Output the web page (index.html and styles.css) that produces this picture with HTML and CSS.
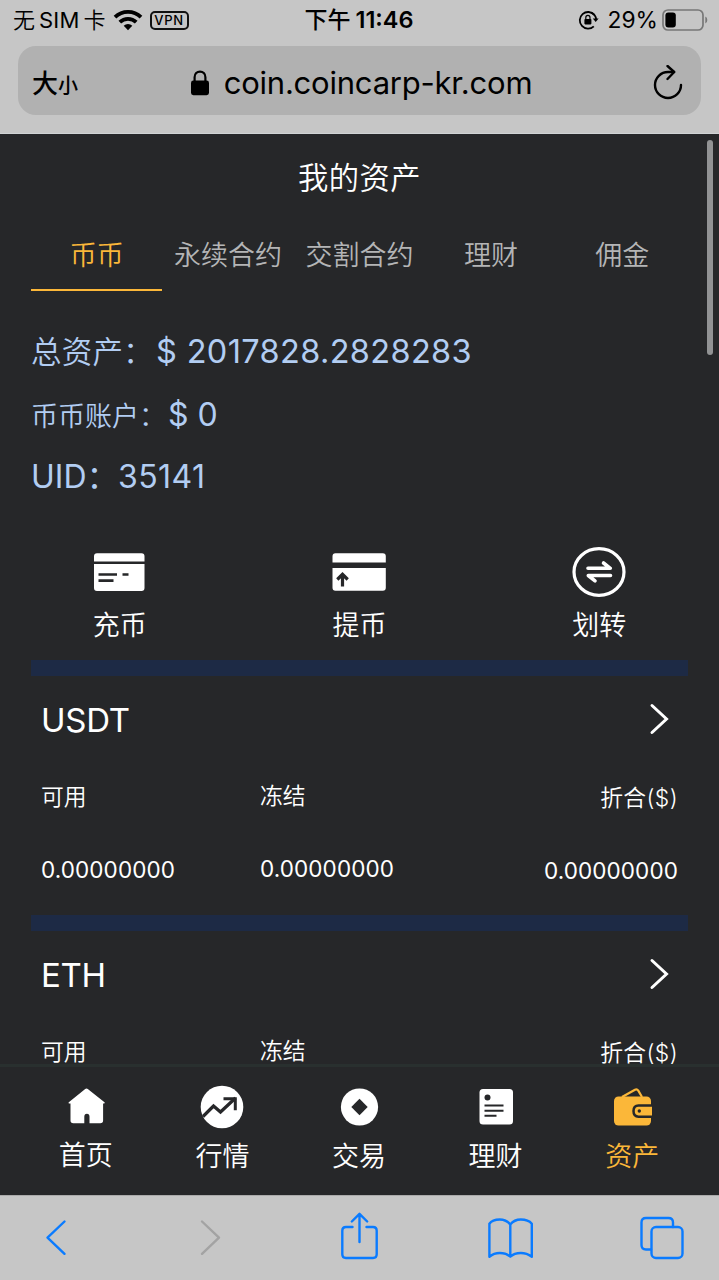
FILE: index.html
```html
<!DOCTYPE html>
<html lang="zh-CN">
<head>
<meta charset="utf-8">
<title>我的资产</title>
<link rel="stylesheet" href="styles.css">
</head>
<body>
<div class="phone">
  <header class="browser-top">
    <div class="status">
      <div class="status-left">
        <span class="carrier">无<span class="sim">SIM</span>卡</span>
        <svg class="wifi" width="30" height="22" viewBox="0 0 30 22"><g fill="none" stroke="#000" stroke-width="3.8"><path d="M2 8.2a18.6 18.6 0 0 1 26 0"/><path d="M6.8 13.2a11.8 11.8 0 0 1 16.4 0"/></g><path d="M15 21.2l-4.3-4.4a6.2 6.2 0 0 1 8.6 0z"/></svg>
        <span class="vpn">VPN</span>
      </div>
      <div class="clock">下午<b>11:46</b></div>
      <div class="status-right">
        <svg class="lock-rotation" width="22" height="20" viewBox="0 0 22 20" fill="none" stroke="#000" stroke-width="1.8"><path d="M16.4 4.900A8.300 8.300 0 1 0 15.800 16.300"/><path d="M13 2.600A8.300 8.300 0 0 1 18.200 9.500"/><path d="M14.800 8.500h5.800l-2.900 3.600z" fill="#000" stroke="none"/><rect x="6.400" y="9" width="7" height="5.400" rx=".8" fill="#000" stroke="none"/><path d="M7.800 9V7.400a2.100 2.100 0 0 1 4.200 0V9" stroke-width="1.200"/></svg>
        <span class="percent">29%</span>
        <svg width="46" height="22" viewBox="0 0 46 22"><rect x="1" y="1" width="40" height="20" rx="5" fill="none" stroke="#777" stroke-width="1.7"/><rect x="3.4" y="3.6" width="10.4" height="15" rx="3"/><path d="M43.3 7.4q2 .8 2 3.6t-2 3.6z" fill="#777"/></svg>
      </div>
    </div>
    <div class="address">
      <span class="textsize">大<small>小</small></span>
      <div class="host">
        <svg width="18" height="26" viewBox="0 0 18 26"><rect x="0" y="10.5" width="18" height="14.7" rx="2.4"/><path d="M3.6 11.5V7.3C3.6 3.7 6 1.6 9 1.6s5.4 2.1 5.4 5.700v4.200" fill="none" stroke="#000" stroke-width="2.200"/></svg>
        <span>coin.coincarp-kr.com</span>
      </div>
      <svg class="reload" width="30" height="36" viewBox="0 0 30 36" fill="none" stroke="#000" stroke-width="2.4" stroke-linecap="round" stroke-linejoin="round"><path d="M28 20A13 13 0 1 1 15 7h6"/><path d="M14.5 1l6.700 6-6.700 7"/></svg>
    </div>
  </header>

  <main class="page">
    <h1 class="title">我的资产</h1>
    <nav class="tabs">
      <span class="tab active">币币</span><span class="tab">永续合约</span><span class="tab">交割合约</span><span class="tab">理财</span><span class="tab">佣金</span>
    </nav>
    <section class="summary">
      <div class="row total"><span class="label">总资产：</span><span class="value">$ 2017828.2828283</span></div>
      <div class="row account"><span class="label">币币账户：</span><span class="value">$ 0</span></div>
      <div class="row uid"><span class="label">UID：</span><span class="value">35141</span></div>
    </section>
    <section class="actions">
      <div class="action">
        <svg width="54" height="54" viewBox="0 0 54 54"><path d="M1 15.500v-5.300a3 3 0 0 1 3-3h44.500a3 3 0 0 1 3 3v5.300z" fill="#fff"/><path d="M1 18h50.500v24a3 3 0 0 1-3 3H4a3 3 0 0 1-3-3z" fill="#fff"/><path d="M5.500 28.500H24M29.500 28.500h6M5.500 34.700h15" stroke="#262729" stroke-width="2.700"/></svg>
        <span>充币</span>
      </div>
      <div class="action">
        <svg width="54" height="54" viewBox="0 0 54 54"><path d="M.5 16.500v-6.300a3 3 0 0 1 3-3h47.300a3 3 0 0 1 3 3v6.300z" fill="#fff"/><path d="M.5 22h53.300v19.800a3 3 0 0 1-3 3H3.500a3 3 0 0 1-3-3z" fill="#fff"/><path d="M10.500 40.500V28.500M5.300 33.500l5.200-5.200 5.200 5.200" fill="none" stroke="#262729" stroke-width="3.200"/></svg>
        <span>提币</span>
      </div>
      <div class="action">
        <svg width="54" height="54" viewBox="0 0 54 54" fill="none" stroke="#fff"><ellipse cx="27" cy="26" rx="25" ry="23.300" stroke-width="3.200"/><path d="M16 22.300H38.300L31.500 17M38.500 29.500H16.300L23 34.800" stroke-width="3.600" stroke-linecap="round" stroke-linejoin="round"/></svg>
        <span>划转</span>
      </div>
    </section>
    <section class="coins">
      <article class="coin">
        <div class="coin-head"><span>USDT</span><svg width="20" height="32" viewBox="0 0 20 32"><path d="M3 2.500L17.500 16l-14.500 13.500" fill="none" stroke="#fff" stroke-width="3" stroke-linecap="round"/></svg></div>
        <div class="cells">
          <div class="cell"><span>可用</span><span class="amount">0.00000000</span></div>
          <div class="cell middle"><span>冻结</span><span class="amount">0.00000000</span></div>
          <div class="cell last"><span>折合($)</span><span class="amount">0.00000000</span></div>
        </div>
      </article>
      <article class="coin">
        <div class="coin-head"><span>ETH</span><svg width="20" height="32" viewBox="0 0 20 32"><path d="M3 2.500L17.500 16l-14.500 13.500" fill="none" stroke="#fff" stroke-width="3" stroke-linecap="round"/></svg></div>
        <div class="cells">
          <div class="cell"><span>可用</span></div>
          <div class="cell middle"><span>冻结</span></div>
          <div class="cell last"><span>折合($)</span></div>
        </div>
      </article>
    </section>
    <div class="scrollbar"></div>
  </main>

  <nav class="menu">
    <div class="item home">
      <svg width="44" height="44" viewBox="0 0 44 44"><path d="M22.500 3.500q.8 0 1.600.7L40.500 17.300q.8 1-.4 1.300h-1V35.500q0 2.800-2.800 2.800H25.500v-6.600q0-3-2.600-3t-2.600 3v6.600H9.300q-2.800 0-2.800-2.800V18.600h-1.500q-1-.4-.2-1.300L20.900 4.200q.8-.7 1.600-.7z" fill="#fff"/></svg>
      <span>首页</span>
    </div>
    <div class="item">
      <svg width="44" height="44" viewBox="0 0 44 44"><circle cx="22" cy="22" r="21.300" fill="#fff"/><path d="M3 31.500L13.500 21l7 6L35.500 13" fill="none" stroke="#262729" stroke-width="3.200"/><path d="M23.500 13.800h11.800v11.500" fill="none" stroke="#262729" stroke-width="3"/></svg>
      <span>行情</span>
    </div>
    <div class="item">
      <svg width="44" height="44" viewBox="0 0 44 44"><circle cx="22.500" cy="22" r="18.600" fill="#fff"/><path d="M22.500 13.800l8.200 8.200-8.200 8.200-8.200-8.200z" fill="#262729"/></svg>
      <span>交易</span>
    </div>
    <div class="item">
      <svg width="44" height="44" viewBox="0 0 44 44"><rect x="5.500" y="4" width="33.500" height="35.500" rx="3.500" fill="#fff"/><circle cx="13.500" cy="12.500" r="3" fill="#262729"/><path d="M10.500 20.500h19M10.500 25.700h19M10.500 30.700h12" stroke="#262729" stroke-width="2"/></svg>
      <span>理财</span>
    </div>
    <div class="item active">
      <svg width="44" height="44" viewBox="0 0 44 44"><path d="M12 12L25 4.700q2-1 3.300 1L32 12" fill="none" stroke="#fbb739" stroke-width="2.200"/><rect x="4" y="11.500" width="37" height="29" rx="4.500" fill="#fbb739"/><path d="M42 20.500H28.500q-5 0-5 5.600t5 5.600H42" fill="#fbb739" stroke="#262729" stroke-width="2.500"/><circle cx="29.300" cy="26" r="1.700" fill="#262729"/></svg>
      <span>资产</span>
    </div>
  </nav>

  <footer class="toolbar">
    <svg width="719" height="85" viewBox="0 0 719 85" fill="none" stroke="#0a7bff" stroke-width="2.400" stroke-linecap="round" stroke-linejoin="round">
      <path d="M64.500 26.500L47.500 42.600l17 16.200"/>
      <path d="M202 26.500l17 16.100-17 16.200" stroke="#a3a3a3"/>
      <path d="M352.500 32H346q-3.700 0-3.700 3.700v23.600q0 3.700 3.700 3.700h27q3.700 0 3.700-3.700V35.700q0-3.700-3.700-3.700h-6.500M359.500 47V19.500M351.800 26.500l7.700-7.700 7.700 7.700"/>
      <path d="M510.300 29.500q-4-5-10.500-5-7.500 0-10.400 4.200v33q4.500-3.700 10.400-3.700 6.500 0 10.500 3.700 4-3.700 10.500-3.700 6 0 11 3.700v-33q-3.500-4.200-11-4.200-6.500 0-10.500 5zv32"/>
      <path d="M651 54.500h-5q-4.500 0-4.500-4.500V27.500q0-4.500 4.500-4.500h22.500q4.500 0 4.500 4.500V32"/><rect x="651.500" y="32" width="31" height="31" rx="4.500"/>
    </svg>
  </footer>
</div>
</body>
</html>
```
FILE: styles.css
```css
* { box-sizing: border-box; }
body { margin: 0; font-family: Inter, "Noto Sans CJK SC", sans-serif; }
svg { display: block; flex: none; }
.phone { width: 719px; height: 1280px; display: flex; flex-direction: column; overflow: hidden; background: #262729; white-space: nowrap; }

.browser-top { height: 134px; flex: none; background: #c6c6c6; color: #000; border-bottom: 1px solid #d0d3d5; }
.status { height: 46px; padding: 0 11px 6px 13px; display: grid; grid-template-columns: 1fr auto 1fr; align-items: center; font-size: 22px; line-height: 40px; }
.status-left, .status-right { display: flex; align-items: center; }
.status-right { justify-content: flex-end; }
.carrier { display: flex; gap: 4px; font-weight: 350; }
.sim { font-size: 22px; letter-spacing: .2px; font-weight: 400; }
.wifi { margin-left: 7px; }
.vpn { margin-left: 7px; width: 39px; height: 19px; border: 2px solid #111; border-radius: 5px; font-size: 13px; line-height: 15px; font-weight: 500; letter-spacing: .8px; text-align: center; }
.clock { margin-left: -3px; font-size: 23px; font-weight: 500; }
.clock b { font-size: 23.500px; font-weight: 600; margin-left: 5px; }
.lock-rotation { margin-right: -2px; }
.percent { margin: 0 4px 0 10px; font-size: 22.800px; }
.address { height: 69px; margin: 0 18px; padding: 0 18px 4px 14px; border-radius: 18px; background: #b1b1b1; display: grid; grid-template-columns: 48px 1fr 30px; align-items: center; }
.textsize { font-size: 26px; font-weight: 500; line-height: 65px; padding-top: 5px; }
.textsize small { font-size: 20px; }
.host { display: flex; justify-content: center; align-items: center; gap: 15px; padding-right: 10px; font-size: 31px; line-height: 65px; letter-spacing: -.22px; }

.page { position: relative; flex: 1; min-height: 0; padding: 23px 31px 0; color: #fff; }
.title { margin: 0; padding-top: 1px; text-align: center; font-size: 30.300px; font-weight: 350; line-height: 40px; letter-spacing: .5px; }
.tabs { margin-top: 24px; display: grid; grid-template-columns: repeat(5, 1fr); height: 68px; color: #b4b5b6; font-size: 27px; font-weight: 350; line-height: 67px; text-align: center; }
.tab.active { color: #fbb739; border-bottom: 2px solid #fbb739; }
.summary { padding-top: 30px; color: #b2cdf2; }
.row { height: 63px; display: flex; align-items: center; line-height: 63px; font-size: 32px; }
.label { font-weight: 350; }
.total .label { font-size: 30.500px; width: 125px; letter-spacing: .2px; }
.total .value { font-size: 32.500px; letter-spacing: .35px; }
.account .label { font-size: 27px; width: 137px; padding-top: 4px; }
.uid { height: 61px; line-height: 61px; }
.uid .value { letter-spacing: .4px; }
.uid .label { width: 87px; font-weight: 400; }
.actions { margin: 39px -31px 0; display: grid; grid-template-columns: repeat(3, 1fr); height: 114px; }
.action { display: flex; flex-direction: column; align-items: center; font-size: 27px; font-weight: 350; line-height: 51px; }
.coin { border-top: 16px solid #1d2a45; height: 255px; }
.coin-head { display: flex; justify-content: space-between; align-items: center; height: 88px; padding: 0 19px 2px 10px; font-size: 33px; letter-spacing: -.3px; }
.coin-head span { padding-top: 2px; }
.cells { display: grid; grid-template-columns: 219px 219px 1fr; margin-top: -5px; padding: 0 10px; font-size: 22.800px; line-height: 73px; font-weight: 350; }
.cell { display: flex; flex-direction: column; padding-top: 1px; }
.middle { padding-top: 0; }
.last { text-align: right; padding-top: 2px; letter-spacing: .4px; }
.amount { font-size: 22.500px; font-weight: 400; letter-spacing: .1px; }
.scrollbar { position: absolute; right: 6px; top: 6px; width: 6px; height: 215px; border-radius: 3px; background: #929394; }

.menu { height: 131px; flex: none; border-top: 3px solid #29302f; color: #fff; display: grid; grid-template-columns: repeat(5, 1fr); padding: 18px 18px 0; }
.item { display: flex; flex-direction: column; align-items: center; font-size: 27px; font-weight: 350; line-height: 55px; }
.item span { margin-right: 1px; }
.item svg { margin-right: 1px; }
.item.home { line-height: 53px; }
.item.active { color: #fbb739; }
.toolbar { height: 85px; flex: none; background: #c6c6c6; border-top: 1px solid #aaa; }
.toolbar svg { margin-top: -1px; }
```
